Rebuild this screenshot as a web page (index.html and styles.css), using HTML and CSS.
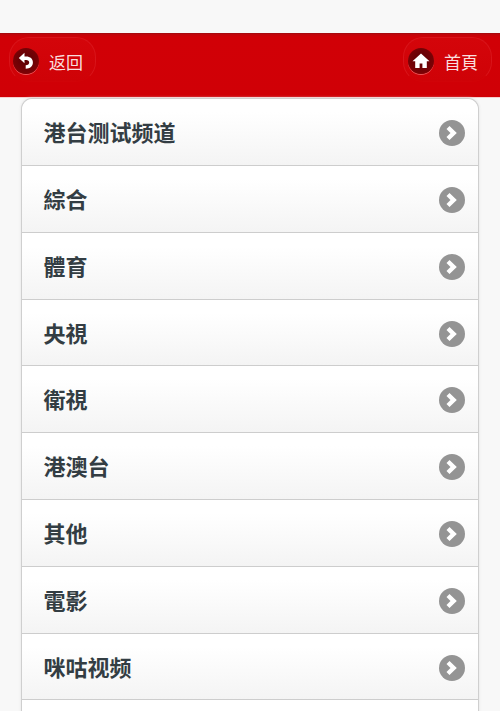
FILE: index.html
```html
<!DOCTYPE html>
<html lang="zh">
<head>
<meta charset="utf-8">
<title>頻道</title>
<link rel="stylesheet" href="styles.css">
</head>
<body>
<div class="page">
  <header class="bar">
    <a class="btn btn-back">
      <span class="ico"><svg viewBox="0 0 26 26" width="26" height="26"><path d="M11.500 4.800 5.800 10l5.700 5.200v-3.300h1.700c1.900 0 3 1 3 2.500 0 1.600-1.200 2.700-3.500 2.800v3.500c4.500 0 7.200-2.500 7.200-6.200 0-3.700-2.700-6-6.700-6h-1.700z" fill="#fff"/></svg></span>
      <span class="btn-text">返回</span>
    </a>
    <a class="btn btn-home">
      <span class="ico"><svg viewBox="0 0 26 26" width="26" height="26"><path d="M13 5.500 4.500 13.200h2.700v6.800h4.400v-4.500h2.800v4.500h4.400v-6.800h2.700z" fill="#fff"/></svg></span>
      <span class="btn-text">首頁</span>
    </a>
  </header>
  <ul class="list">
    <li class="row"><span class="label">港台测试频道</span><span class="go"><svg viewBox="0 0 26 26" width="26" height="26"><path d="M10.500 6 17.800 13l-7.300 7-3-3 4-4-4-4z" fill="#fff"/></svg></span></li>
    <li class="row"><span class="label">綜合</span><span class="go"><svg viewBox="0 0 26 26" width="26" height="26"><path d="M10.500 6 17.800 13l-7.300 7-3-3 4-4-4-4z" fill="#fff"/></svg></span></li>
    <li class="row"><span class="label">體育</span><span class="go"><svg viewBox="0 0 26 26" width="26" height="26"><path d="M10.500 6 17.800 13l-7.300 7-3-3 4-4-4-4z" fill="#fff"/></svg></span></li>
    <li class="row"><span class="label">央視</span><span class="go"><svg viewBox="0 0 26 26" width="26" height="26"><path d="M10.500 6 17.800 13l-7.300 7-3-3 4-4-4-4z" fill="#fff"/></svg></span></li>
    <li class="row"><span class="label">衛視</span><span class="go"><svg viewBox="0 0 26 26" width="26" height="26"><path d="M10.500 6 17.800 13l-7.300 7-3-3 4-4-4-4z" fill="#fff"/></svg></span></li>
    <li class="row"><span class="label">港澳台</span><span class="go"><svg viewBox="0 0 26 26" width="26" height="26"><path d="M10.500 6 17.800 13l-7.300 7-3-3 4-4-4-4z" fill="#fff"/></svg></span></li>
    <li class="row"><span class="label">其他</span><span class="go"><svg viewBox="0 0 26 26" width="26" height="26"><path d="M10.500 6 17.800 13l-7.300 7-3-3 4-4-4-4z" fill="#fff"/></svg></span></li>
    <li class="row"><span class="label">電影</span><span class="go"><svg viewBox="0 0 26 26" width="26" height="26"><path d="M10.500 6 17.800 13l-7.300 7-3-3 4-4-4-4z" fill="#fff"/></svg></span></li>
    <li class="row"><span class="label">咪咕视频</span><span class="go"><svg viewBox="0 0 26 26" width="26" height="26"><path d="M10.500 6 17.800 13l-7.300 7-3-3 4-4-4-4z" fill="#fff"/></svg></span></li>
    <li class="row"></li>
  </ul>
</div>
</body>
</html>
```

FILE: styles.css
```css
html, body {
  margin: 0;
  padding: 0;
  height: 100%;
  overflow: hidden;
  background: #f8f8f8;
}
.page {
  padding-top: 33px;
  font-family: "Noto Sans CJK TC", "Noto Sans CJK SC", sans-serif;
}
.bar {
  height: 64px;
  box-sizing: border-box;
  background: linear-gradient(#bd060b 0, #d10006 5%, #d00006 100%);
  border-top: 1px solid #a80a0e;
  box-shadow: 0 1px 0 #f6cfcf;
  display: flex;
  justify-content: space-between;
  padding: 3px 8px 0 9px;
}
.btn {
  display: flex;
  align-items: center;
  gap: 10px;
  height: 45px;
  box-sizing: border-box;
  padding: 3px 12px 0 3px;
  border: 1px solid #d8141a;
  border-bottom-color: #d10308;
  border-radius: 20px;
  background: linear-gradient(#d4050a, #cf0207);
  color: #f9dede;
  font-size: 17px;
}
.btn-home { padding: 3px 13px 0 4px; }
.ico {
  width: 26px;
  height: 26px;
  border-radius: 50%;
  background: radial-gradient(circle at 50% 45%, #5a0004, #8a0306);
  box-shadow: 0 1px 0 #e9585a;
  display: block;
}
.ico svg, .go svg { display: block; }
.list {
  list-style: none;
  margin: 1.3px 21px 0 21px;
  padding: 0;
  background: #fff;
  border: 1px solid #cfcfcf;
  border-bottom: 0;
  border-radius: 11px 11px 0 0;
  box-shadow: 0 0 3px #e2e2e2;
}
.row {
  height: 66.8px;
  box-sizing: border-box;
  display: flex;
  align-items: center;
  justify-content: space-between;
  padding: 0 13px 0 21.500px;
  border-bottom: 1px solid #cdcdcd;
  background: linear-gradient(#ffffff 20%, #f4f4f4);
}
.row:first-child { border-radius: 11px 11px 0 0; }
.label {
  font-size: 22px;
  font-weight: 700;
  color: #333d43;
  line-height: 1;
  margin-bottom: 2px;
}
.go {
  width: 26px;
  height: 26px;
  border-radius: 50%;
  background: #949494;
  display: block;
  margin-top: 2px;
}
```
